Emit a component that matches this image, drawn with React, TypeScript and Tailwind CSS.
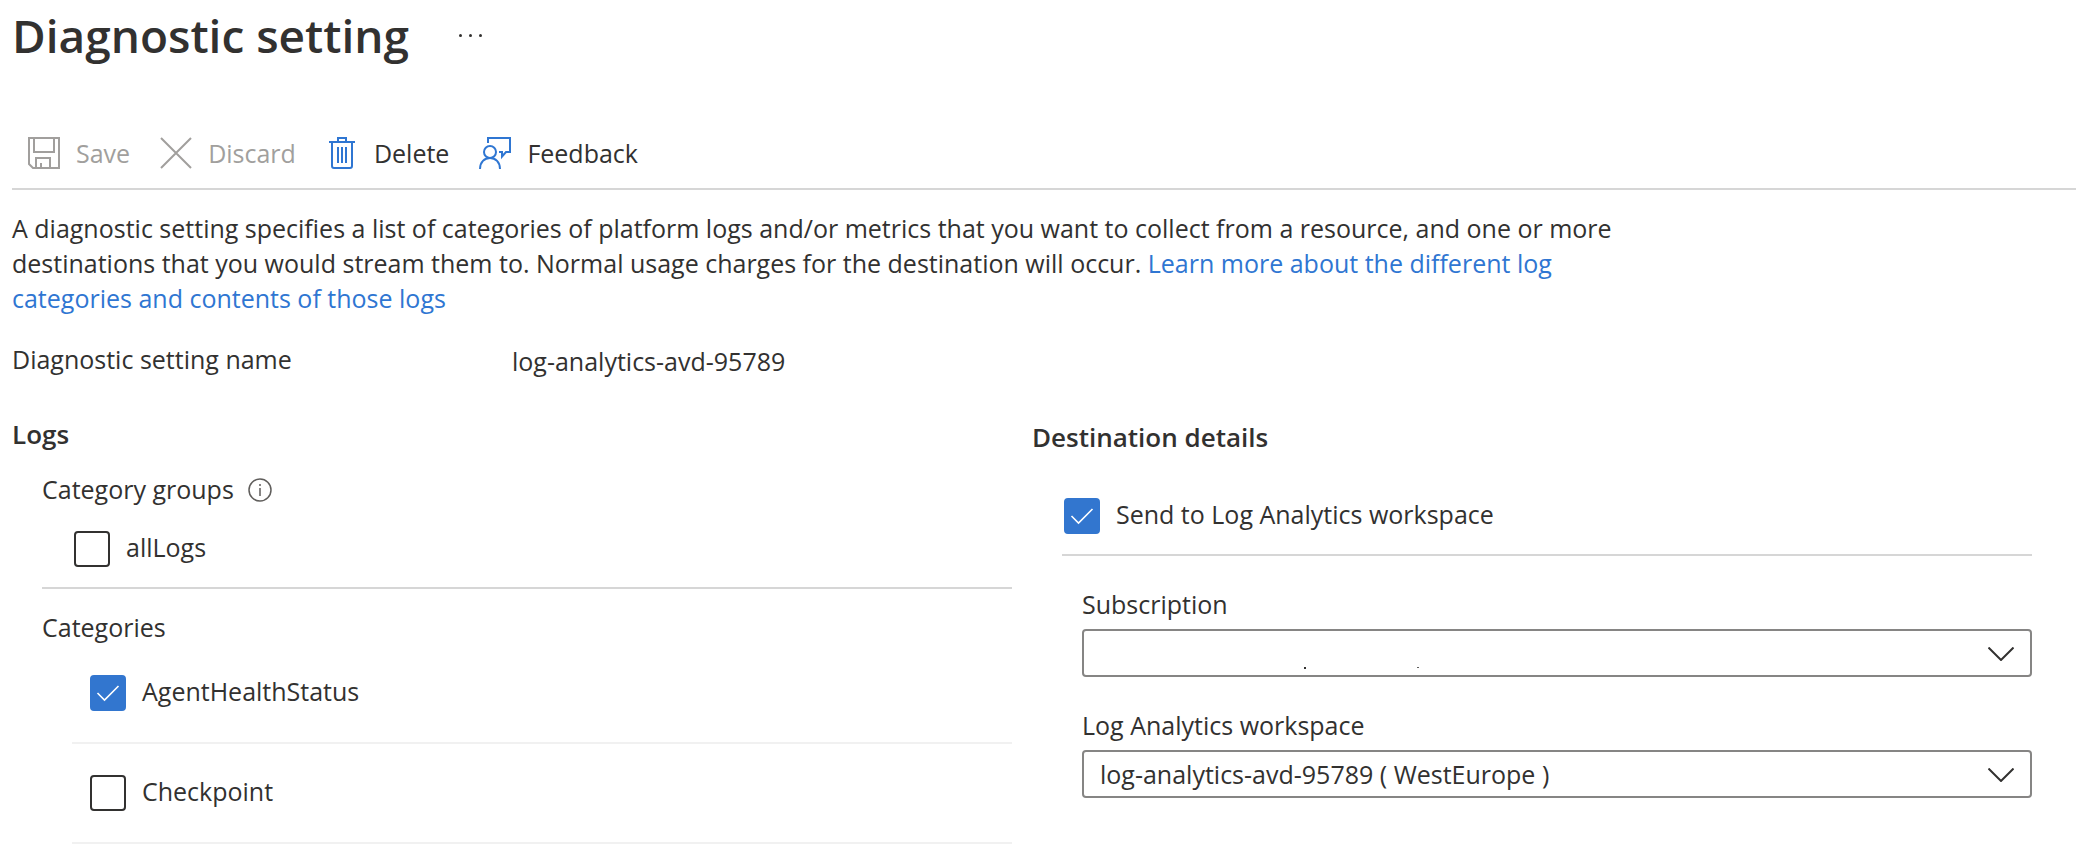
import { useId, useState, type ReactNode } from 'react';

function SaveIcon() {
  return (
    <svg viewBox="0 0 32 32" className="size-8" fill="none" stroke="currentColor" strokeWidth="2" aria-hidden="true">
      <path d="M1 1h30v30H5l-4-4z" />
      <path d="M6 1v14h20V1" />
      <path d="M8 31V21h14v10" />
      <path d="M13 31v-5" />
    </svg>
  );
}

function DiscardIcon() {
  return (
    <svg viewBox="0 0 32 32" className="size-8" fill="none" stroke="currentColor" strokeWidth="2" aria-hidden="true">
      <path d="M1 1l30 30M31 1L1 31" />
    </svg>
  );
}

function DeleteIcon() {
  return (
    <svg viewBox="-3 0 32 32" className="size-8" fill="none" stroke="#2f76d2" strokeWidth="2" aria-hidden="true">
      <path d="M0 5h26" />
      <path d="M9 5V1h8v4" />
      <path d="M3 5v24q0 2 2 2h16q2 0 2-2V5" />
      <path d="M9 10v16M13 10v16M17 10v16" />
    </svg>
  );
}

function FeedbackIcon() {
  return (
    <svg viewBox="0 0 32 32" className="size-8" fill="none" stroke="#2f76d2" strokeWidth="2" aria-hidden="true">
      <path d="M9 6V1h22v14h-4l-4 4.500v-4.500h-3" />
      <circle cx="11" cy="15" r="6" />
      <path d="M1 32c0-7 4.500-11 10-11s10 4 10 11" />
    </svg>
  );
}

function ToolbarButton({ icon, children, disabled }: { icon: ReactNode; children: string; disabled?: boolean }) {
  return (
    <button type="button" disabled={disabled} className="flex items-center gap-4 disabled:text-[#a19f9d]">
      {icon}
      <span className="pt-0.5">{children}</span>
    </button>
  );
}

function Checkbox({ label, defaultChecked = false }: { label: string; defaultChecked?: boolean }) {
  const id = useId();
  return (
    <div className="flex items-start gap-4">
      <span className="grid size-9 shrink-0">
        <input
          id={id}
          type="checkbox"
          defaultChecked={defaultChecked}
          className="peer col-start-1 row-start-1 size-9 appearance-none rounded-sm border-2 border-[#323130] checked:border-[#3276cf] checked:bg-[#3276cf]"
        />
        <svg
          viewBox="0 0 36 36"
          className="pointer-events-none invisible col-start-1 row-start-1 size-9 peer-checked:visible"
          fill="none"
          stroke="white"
          strokeWidth="1.600"
          aria-hidden="true"
        >
          <path d="M7.500 18l7 7L28.500 11" />
        </svg>
      </span>
      <label htmlFor={id} className="leading-[33px]">
        {label}
      </label>
    </div>
  );
}

function Dropdown({ label, options, children }: { label: string; options: string[]; children?: ReactNode }) {
  const id = useId();
  const [value, setValue] = useState(options[0]);
  return (
    <div className="mt-[31px]">
      <label htmlFor={id} className="block">
        {label}
      </label>
      <div className="relative mt-[7px]">
        <select
          id={id}
          value={value}
          onChange={(e) => setValue(e.target.value)}
          className="block h-12 w-full appearance-none rounded-sm border-2 border-[#868584] bg-white pr-16 pl-4"
        >
          {options.map((o) => (
            <option key={o} value={o}>
              {o}
            </option>
          ))}
        </select>
        {children}
        <svg
          viewBox="0 0 26 14"
          className="pointer-events-none absolute top-[18px] right-[18px] h-3.5 w-[26px]"
          fill="none"
          stroke="#323130"
          strokeWidth="2"
          aria-hidden="true"
        >
          <path d="M.5.5L13 13 25.500.5" />
        </svg>
      </div>
    </div>
  );
}

export default function App() {
  return (
    <main className="overflow-hidden bg-white pl-3 font-['Open_Sans','Noto_Sans',sans-serif] text-[25px] leading-[35px] text-[#323130]">
      <header className="flex items-center gap-[50px]">
        <h1 className="text-[46px] leading-[70px] font-semibold">Diagnostic setting</h1>
        <button type="button" aria-label="More options" className="flex gap-[7px]">
          <span className="size-[3px] rounded-full bg-[#323130]" />
          <span className="size-[3px] rounded-full bg-[#323130]" />
          <span className="size-[3px] rounded-full bg-[#323130]" />
        </button>
      </header>

      <div role="toolbar" aria-label="Actions" className="mt-16 flex gap-[30px] border-b-2 border-[#d6d6d6] pb-[17px] pl-4">
        <ToolbarButton icon={<SaveIcon />} disabled>
          Save
        </ToolbarButton>
        <ToolbarButton icon={<DiscardIcon />} disabled>
          Discard
        </ToolbarButton>
        <ToolbarButton icon={<DeleteIcon />}>Delete</ToolbarButton>
        <ToolbarButton icon={<FeedbackIcon />}>Feedback</ToolbarButton>
      </div>

      <p className="mt-[21px] max-w-[1600px]">
        A diagnostic setting specifies a list of categories of platform logs and/or metrics that you want to collect
        from a resource, and one or more destinations that you would stream them to. Normal usage charges for the
        destination will occur.{' '}
        <a href="#learn-more" className="text-[#2f76d2]">
          Learn more about the different log categories and contents of those logs
        </a>
      </p>

      <dl className="mt-[26px] flex">
        <dt className="w-[500px]">Diagnostic setting name</dt>
        <dd className="pt-0.5">log-analytics-avd-95789</dd>
      </dl>

      <div className="mt-[38px] grid grid-cols-2 gap-5 pr-11">
        <section>
          <h2 className="text-[26px] font-semibold">Logs</h2>
          <div className="mt-5 pl-[30px]">
            <div className="flex items-center gap-3.5">
              <h3>Category groups</h3>
              <svg viewBox="0 0 24 24" className="size-6" fill="none" stroke="#605e5c" strokeWidth="1.500" aria-hidden="true">
                <circle cx="12" cy="12" r="11" />
                <path d="M12 10v8M12 6v2" />
              </svg>
            </div>
            <div className="mt-6 border-b-2 border-[#d6d6d6] pb-5 pl-8">
              <Checkbox label="allLogs" />
            </div>
            <h3 className="mt-[21px]">Categories</h3>
            <ul className="-mt-px pl-[30px]">
              <li className="border-b-2 border-[#f1f1f1] py-[31px] pl-[18px]">
                <Checkbox label="AgentHealthStatus" defaultChecked />
              </li>
              <li className="border-b-2 border-[#f1f1f1] py-[31px] pl-[18px]">
                <Checkbox label="Checkpoint" />
              </li>
            </ul>
          </div>
        </section>

        <section className="pt-[3px]">
          <h2 className="text-[26px] font-semibold">Destination details</h2>
          <div className="mt-[43px] pl-[30px]">
            <div className="border-b-2 border-[#d6d6d6] pb-5 pl-0.5">
              <Checkbox label="Send to Log Analytics workspace" defaultChecked />
            </div>
            <div className="pl-5">
              <Dropdown label="Subscription" options={['']}>
                <span className="pointer-events-none absolute top-[38px] left-[222px] size-0.5 bg-[#323130]" />
                <span className="pointer-events-none absolute top-[38px] left-[335px] h-px w-0.5 bg-[#605e5c]" />
              </Dropdown>
              <Dropdown label="Log Analytics workspace" options={['log-analytics-avd-95789 ( WestEurope )']} />
            </div>
          </div>
        </section>
      </div>
    </main>
  );
}
